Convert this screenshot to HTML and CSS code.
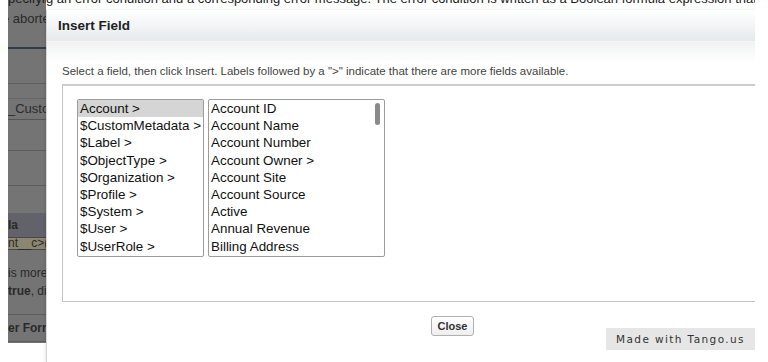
FILE: index.html
```
<!DOCTYPE html>
<html lang="en">
<head>
    <meta charset="UTF-8">
    <meta name="viewport" content="width=device-width, initial-scale=1.0">
    <title>Insert Field</title>
    <link rel="stylesheet" href="styles.css">
</head>
<body>

    <div class="screen">
        <!-- page behind the dialog, greyed out -->
        <div class="strip">
            <div class="strip-top"><span>pecifyin</span></div>
            <div class="strip-line2">e aborte</div>
            <div class="strip-rule dark"></div>
            <div class="strip-gap" style="height: 34px"></div>
            <div class="strip-rule"></div>
            <div class="strip-custom">_Custo</div>
            <div class="strip-gap" style="height: 30px"></div>
            <div class="strip-rule"></div>
            <div class="strip-gap" style="height: 34px"></div>
            <div class="strip-rule"></div>
            <div class="strip-gap" style="height: 27px"></div>
            <div class="strip-band">la</div>
            <div class="strip-field">nt__c&gt;(</div>
            <div class="strip-text first">is more</div>
            <div class="strip-text"><b>true</b>, di</div>
            <div class="strip-gap" style="height: 14px"></div>
            <div class="strip-rule"></div>
            <div class="strip-text bold">er Forr</div>
            <div class="strip-rule"></div>
        </div>

        <div class="main">
            <div class="top-line"><span>g an error condition and a corresponding error message. The error condition is written as a Boolean formula expression that re</span></div>

            <div class="dialog">
                <div class="dialog-header">Insert Field</div>
                <div class="dialog-sub"></div>
                <div class="dialog-body">
                    <p class="hint">Select a field, then click Insert. Labels followed by a "&gt;" indicate that there are more fields available.</p>

                    <div class="picker">
                        <div class="listbox left">
                            <div class="item selected">Account &gt;</div>
                            <div class="item">$CustomMetadata &gt;</div>
                            <div class="item">$Label &gt;</div>
                            <div class="item">$ObjectType &gt;</div>
                            <div class="item">$Organization &gt;</div>
                            <div class="item">$Profile &gt;</div>
                            <div class="item">$System &gt;</div>
                            <div class="item">$User &gt;</div>
                            <div class="item">$UserRole &gt;</div>
                        </div>
                        <div class="listbox right">
                            <div class="item">Account ID</div>
                            <div class="item">Account Name</div>
                            <div class="item">Account Number</div>
                            <div class="item">Account Owner &gt;</div>
                            <div class="item">Account Site</div>
                            <div class="item">Account Source</div>
                            <div class="item">Active</div>
                            <div class="item">Annual Revenue</div>
                            <div class="item">Billing Address</div>
                            <div class="thumb"></div>
                        </div>
                    </div>

                    <div class="actions">
                        <button class="btn">Close</button>
                    </div>
                </div>
            </div>
        </div>
    </div>

    <div class="tango">Made with Tango.us</div>

</body>
</html>
```

FILE: styles.css
```
body {
    margin: 0;
    padding: 0;
    background: #ffffff;
    font-family: 'Liberation Sans', Arial, sans-serif;
    width: 768px;
    height: 362px;
    overflow: hidden;
    position: relative;
}

.screen {
    display: flex;
    margin-left: 8px;
    width: 747px;
    height: 362px;
    overflow: hidden;
}

/* greyed page on the left */
.strip {
    width: 38px;
    flex-shrink: 0;
    height: 343px;
    background: #747474;
    color: #2a2a2a;
    font-size: 13px;
    overflow: hidden;
    white-space: nowrap;
}

.strip-top,
.top-line {
    height: 8px;
    overflow: hidden;
    white-space: nowrap;
    font-size: 13px;
    color: #1e1e1e;
}

.strip-top span,
.top-line span {
    display: block;
    line-height: 13px;
    margin-top: -8px;
}

.strip-line2 {
    height: 22px;
    line-height: 22px;
    margin-left: -6px;
}

.strip-rule {
    height: 1px;
    background: #5e5e5e;
}

.strip-rule.dark {
    height: 2px;
    margin-top: 17px;
    background: #2f3d48;
}

.strip-custom {
    height: 20px;
    line-height: 20px;
    border-bottom: 1px solid #555;
    border-top: 1px solid #666;
    margin-top: 14px;
}

.strip-band {
    height: 24px;
    line-height: 24px;
    background: #62636a;
    font-weight: bold;
    font-size: 12px;
}

.strip-field {
    height: 11px;
    line-height: 11px;
    font-size: 12px;
    background: #8b8672;
    border-top: 1px solid #4a4a40;
    border-bottom: 1px solid #4a4a40;
}

.strip-text {
    height: 18px;
    line-height: 18px;
    font-size: 12px;
}

.strip-text.first {
    margin-top: 14px;
}

.strip-text.bold {
    font-weight: bold;
    height: 26px;
    line-height: 26px;
}

/* dialog column */
.main {
    display: flex;
    flex-direction: column;
    width: 812px;
    flex-shrink: 0;
}

.top-line {
    height: 10px;
    color: #1a1a1a;
}

.dialog {
    flex: 1;
    background: #ffffff;
    border-left: 1px solid #d6d6d6;
    box-shadow: -1px 0 3px rgba(0, 0, 0, 0.1);
}

.dialog-header {
    height: 31px;
    line-height: 31px;
    padding-left: 11px;
    font-size: 13.5px;
    font-weight: bold;
    color: #222;
    background: linear-gradient(to bottom, #ffffff, #e6eaec);
    border-bottom: 1px solid #f4f6f7;
}

.dialog-sub {
    height: 20px;
    background: linear-gradient(to bottom, #f1f2f3, #ffffff);
}

.dialog-body {
    padding: 0 0 0 15px;
}

.hint {
    margin: 0;
    height: 22px;
    line-height: 18px;
    font-size: 11.5px;
    color: #444;
}

.picker {
    display: flex;
    gap: 4px;
    height: 202px;
    padding: 13px 0 0 14px;
    border: 1px solid #c4c4c4;
    border-top: 2px solid #cbcbcb;
}

.listbox {
    height: 156px;
    border: 1px solid #9c9c9c;
    border-radius: 2px;
    font-size: 13.4px;
    color: #111;
    position: relative;
    overflow: hidden;
}

.listbox.left {
    width: 125px;
}

.listbox.right {
    width: 175px;
}

.item {
    height: 17.2px;
    line-height: 17.2px;
    padding-left: 2px;
    white-space: nowrap;
}

.item.selected {
    background: #d5d5d5;
}

.thumb {
    position: absolute;
    top: 3px;
    right: 4px;
    width: 5px;
    height: 22px;
    border-radius: 3px;
    background: #8a8a8a;
}

.actions {
    display: flex;
    justify-content: center;
    padding-top: 14px;
    padding-right: 15px;
}

.btn {
    font-family: 'Liberation Sans', Arial, sans-serif;
    font-size: 11px;
    font-weight: bold;
    color: #333;
    height: 20px;
    padding: 0 6px;
    border: 1px solid #b0b0b0;
    border-radius: 3px;
    background: linear-gradient(to bottom, #ffffff, #eeeeee);
}

/* watermark */
.tango {
    position: absolute;
    left: 606px;
    top: 328px;
    width: 149px;
    height: 22px;
    line-height: 22px;
    text-align: center;
    background: #e6e6e6;
    font-family: 'DejaVu Sans', sans-serif;
    font-size: 10.5px;
    letter-spacing: 1.4px;
    color: #333;
}
```
